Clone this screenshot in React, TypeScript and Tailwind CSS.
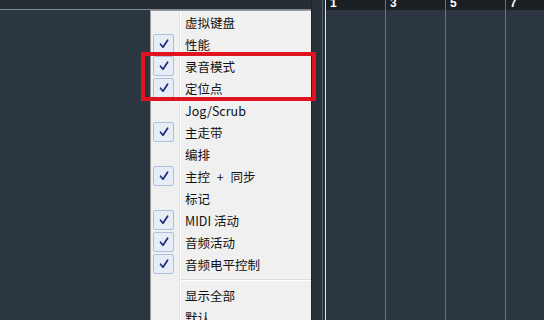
import type { ReactNode } from 'react'

type Item = { label: string; checked?: boolean; wide?: boolean }

const ITEMS: Item[] = [
  { label: '虚拟键盘' },
  { label: '性能', checked: true },
  { label: '录音模式', checked: true },
  { label: '定位点', checked: true },
  { label: 'Jog/Scrub' },
  { label: '主走带', checked: true },
  { label: '编排' },
  { label: '主控 + 同步', checked: true, wide: true },
  { label: '标记' },
  { label: 'MIDI 活动', checked: true },
  { label: '音频活动', checked: true },
  { label: '音频电平控制', checked: true },
]

const EXTRA: Item[] = [{ label: '显示全部' }, { label: '默认' }]

const BARS = ['1', '3', '5', '7']

function Check() {
  return (
    <div className="ml-[2px] w-[21px] h-[20px] rounded-[2px] border border-[#adc0d9] bg-[#e6edf7] flex items-center justify-center">
      <svg width="12" height="12" viewBox="0 0 12 12" fill="none">
        <path d="M2.5 6.2 L5 9.2 L9.6 2.2" stroke="#1b2c78" strokeWidth="1.7" strokeLinecap="round" strokeLinejoin="round" />
      </svg>
    </div>
  )
}

function Row({ item }: { item: Item }) {
  return (
    <div className="h-[22px] flex items-center">
      <div className="w-[28px] shrink-0 flex items-center">{item.checked && <Check />}</div>
      <div className="w-[6px] shrink-0" />
      <span
        className={`pt-[2px] text-[12.5px] leading-none text-[#111] ${item.wide ? '[word-spacing:4px]' : ''}`}
      >
        {item.label}
      </span>
    </div>
  )
}

function Gutter({ children }: { children: ReactNode }) {
  return <div className="relative">{children}</div>
}

export default function App() {
  return (
    <div
      className="relative w-[544px] h-[320px] overflow-hidden flex bg-[#2b3540]"
      style={{ fontFamily: '"Noto Sans CJK SC", "Noto Sans", sans-serif' }}
    >
      {/* left pane, under the menu */}
      <div className="w-[311px] shrink-0 flex flex-col">
        <div className="h-[9px] bg-[#252d35]" />
        <div className="h-px bg-[#7b8891]" />
        <div className="flex-1 bg-[#2c3640]" />
      </div>

      {/* divider strip */}
      <div className="w-px shrink-0 bg-[#1c2226]" />
      <div className="w-[10px] shrink-0 bg-[#29323b]" />
      <div className="w-px shrink-0 bg-[#56636c]" />
      <div className="w-[2px] shrink-0 bg-[#252d35]" />

      {/* arrangement */}
      <div className="flex-1 min-w-0 overflow-hidden flex">
        {BARS.map((b, i) => (
          <div
            key={b}
            className={`w-[60px] shrink-0 flex flex-col border-l ${i === 0 ? 'border-[#dfe6ea]' : 'border-[#66747e]'}`}
          >
            <div className="h-[10px] bg-[#1b2025] relative overflow-hidden">
              <span
                className="absolute left-[4px] top-[-3px] text-[12px] font-bold leading-none text-white"
                style={{ fontFamily: '"Liberation Sans", sans-serif' }}
              >
                {b}
              </span>
            </div>
            <div className="flex-1 bg-[#2b3640]" />
          </div>
        ))}
      </div>

      {/* context menu */}
      <div className="absolute left-[150px] top-[10px] w-[161px] h-[320px] bg-[#f0f0f0] border-l border-t border-[#9a9a9a]">
        <div className="absolute left-[28px] top-0 bottom-0 w-px bg-[#e0e0e0]" />
        <div className="absolute left-[29px] top-0 bottom-0 w-px bg-white" />
        <Gutter>
          {ITEMS.map((it) => (
            <Row key={it.label} item={it} />
          ))}
          <div className="h-[9px] flex items-center pl-[29px]">
            <div className="flex-1 flex flex-col">
              <div className="h-px bg-[#dcdcdc]" />
              <div className="h-px bg-white" />
            </div>
          </div>
          {EXTRA.map((it) => (
            <Row key={it.label} item={it} />
          ))}
        </Gutter>
      </div>

      {/* red highlight */}
      <div className="absolute left-[141px] top-[52px] w-[175px] h-[49px] border-[4px] border-[#e0141f]" />
    </div>
  )
}
